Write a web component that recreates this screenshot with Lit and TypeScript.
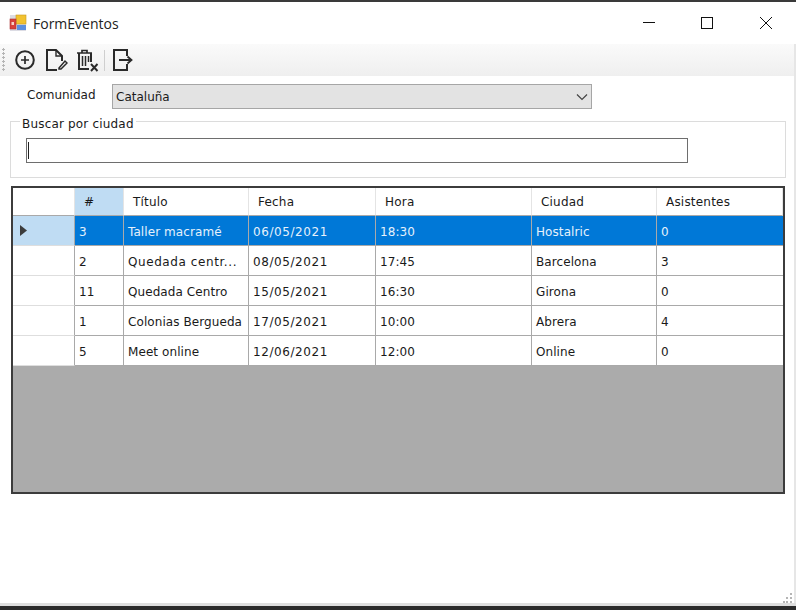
import { LitElement, html, css, svg } from "lit";
import { customElement } from "lit/decorators.js";

const COLS = ["#", "Título", "Fecha", "Hora", "Ciudad", "Asistentes"];
const ROWS = [
  ["3", "Taller macramé", "06/05/2021", "18:30", "Hostalric", "0"],
  ["2", "Quedada centr...", "08/05/2021", "17:45", "Barcelona", "3"],
  ["11", "Quedada Centro", "15/05/2021", "16:30", "Girona", "0"],
  ["1", "Colonias Bergueda", "17/05/2021", "10:00", "Abrera", "4"],
  ["5", "Meet online", "12/06/2021", "12:00", "Online", "0"],
];

const isWide = (t: string) => t.endsWith("...") || /^\d+\/\d+\/\d+$/.test(t);

@customElement("app-root")
export class AppRoot extends LitElement {
  static styles = css`
    :host { display: block; width: 796px; height: 610px; background: #fff; font-family: "DejaVu Sans", sans-serif; font-size: 12px; color: #1a1a1a; overflow: hidden; }
    .win { height: 610px; display: flex; flex-direction: column; box-sizing: border-box; border-top: 2px solid #3a3a3a; position: relative; }
    .title { height: 42px; flex: none; display: flex; align-items: center; padding-left: 9px; gap: 6px; font-family: "Open Sans", sans-serif; font-size: 14px; color: #222; box-sizing: border-box; }
    .ctl { margin-left: auto; display: flex; align-items: center; }
    .ctl svg { display: block; width: 158px; height: 16px; }
    .toolbar { height: 32px; flex: none; margin-right: 2px; background: linear-gradient(#fafafa, #efefef); display: flex; align-items: center; padding-left: 2px; }
    .grip { width: 3px; height: 24px; margin-right: 7.5px; background-image: radial-gradient(circle at 1.5px 1.5px, #b4b4b4 1.2px, transparent 1.4px); background-size: 3px 4px; }
    .toolbar svg { display: block; flex: none; }
    .gap { width: 7px; flex: none; }
    .tb-sep { width: 1px; height: 21px; background: #cfcfcf; margin: 0 5px; flex: none; }
    .body { flex: 1; display: flex; flex-direction: column; padding: 8px 10px 0 10px; min-height: 0; }
    .com { display: flex; align-items: center; height: 25px; }
    .com label { width: 102px; padding-left: 17px; box-sizing: border-box; padding-bottom: 4px; }
    .combo { width: 480px; height: 25px; box-sizing: border-box; background: #e3e3e3; border: 1px solid #a6a6a6; display: flex; align-items: center; justify-content: space-between; padding: 0 3px 0 3px; }
    .combo svg { display: block; }
    fieldset { margin: 2px 0 0 0; padding: 0; width: 776px; height: 67px; box-sizing: border-box; border: 1px solid #dcdcdc; min-inline-size: 0; }
    legend { margin-left: 9px; padding: 6px 2px 0; line-height: 14px; font-size: 12px; letter-spacing: 0.18px; }
    .input { margin: 7px 0 0 15px; width: 662px; height: 25px; box-sizing: border-box; border: 1px solid #6e6e6e; background: #fff; display: flex; align-items: center; padding-left: 1px; }
    .caret { width: 1px; height: 17px; background: #222; }
    .grid { margin: 8px 0 0 1px; width: 774px; height: 308px; box-sizing: border-box; border: 2px solid #3c3c3c; background: #ababab; display: flex; flex-direction: column; flex: none; }
    .row { display: grid; grid-template-columns: 62px 49px 125px 127px 156px 125px 126px; height: 30px; flex: none; }
    .row.head { height: 28px; }
    .cell { box-sizing: border-box; background: #fff; border-right: 1px solid #a9a9a9; border-bottom: 1px solid #a9a9a9; padding: 2px 0 0 4px; display: flex; align-items: center; white-space: nowrap; overflow: hidden; letter-spacing: 0.08px; }
    .cell.wide { letter-spacing: 0.58px; }
    .cell:last-child { border-right: none; }
    .head .cell { border-right: 1px solid #e4e4e4; border-bottom: 1px solid #a9a9a9; padding: 0 0 0 9px; letter-spacing: 0.2px; }
    .head .cell.num { background: #bfdcf3; }
    .rowhead { border-right-color: #a9a9a9; border-bottom-color: #dedede; padding: 0 0 0 7px; }
    .sel .cell { background: #0078d7; color: #e6f1fb; }
    .sel .rowhead { background: #bfdcf3; }
    .grip-br { position: absolute; right: 3px; bottom: 7px; display: block; }
    .bottom { position: absolute; left: 0; right: 0; bottom: 0; height: 7px; box-sizing: border-box; background: #2b2b2b; border-top: 3px solid #dedede; }
    .side { position: absolute; right: 0; top: 42px; bottom: 7px; width: 2px; background: #e6e6e6; }
  `;

  private appIcon() {
    return html`<svg width="18" height="18" viewBox="0 0 18 18">
      <rect x="1" y="1" width="16" height="16" fill="#dcdce4"/>
      <rect x="7" y="1" width="10" height="9" fill="#f2c230" stroke="#c59a20" stroke-width=".6"/>
      <rect x="1" y="5" width="6" height="10" fill="#d8413c" stroke="#a33" stroke-width=".6"/>
      <rect x="2.5" y="8" width="2.5" height="3" fill="#f4d0c8"/>
      <rect x="8" y="11" width="9" height="5" fill="#5b8fe0"/>
    </svg>`;
  }

  private winCtl() {
    return html`<svg viewBox="0 0 158 16">
      <path d="M5 7.5H17" stroke="#111" stroke-width="1" fill="none"/>
      <rect x="63.5" y="2.5" width="11" height="11" stroke="#111" stroke-width="1" fill="none"/>
      <path d="M122 2L134 14M134 2L122 14" stroke="#111" stroke-width="1" fill="none"/>
    </svg>`;
  }

  private chevron() {
    return html`<svg width="12" height="8" viewBox="0 0 12 8"><path d="M1 1.5L6 6.5L11 1.5" stroke="#444" stroke-width="1.2" fill="none"/></svg>`;
  }

  private tool(body: unknown) {
    return html`<svg width="24" height="24" viewBox="0 0 24 24" fill="none" stroke="#2a2a2a" stroke-width="2">${body}</svg>`;
  }

  render() {
    return html`<div class="win">
      <div class="title">
        ${this.appIcon()}
        <span>FormEventos</span>
        <div class="ctl">${this.winCtl()}</div>
      </div>
      <div class="toolbar">
        <div class="grip"></div>
        ${this.tool(svg`<circle cx="12" cy="12" r="8.8"/><path d="M12 8v8M8 12h8" stroke-width="1.7"/>`)}
        <span class="gap"></span>
        ${this.tool(svg`<path d="M18 13V8l-6-6H3v20h10"/><path d="M12 2v6h6" stroke-width="1.4"/><path d="M15 20l6-7 2 2-6 6h-2z" stroke-width="1.5"/>`)}
        <span class="gap"></span>
        ${this.tool(svg`<path d="M2 5h15M7 5V2.5h5V5" stroke-width="1.7"/><path d="M4 5v16h10M16 5v9" stroke-width="2"/><path d="M7.5 8v10M10.5 8v10M13.5 8v6" stroke-width="1.5"/><path d="M16 16l6.5 7M22.5 16L16 23" stroke-width="1.9"/>`)}
        <div class="tb-sep"></div>
        ${this.tool(svg`<path d="M17 8V2H4v20h13v-6"/><path d="M9 12h12M17.5 8.5l4 3.5-4 3.5" stroke-width="1.8"/>`)}
      </div>
      <div class="body">
        <div class="com">
          <label>Comunidad</label>
          <div class="combo"><span>Cataluña</span>${this.chevron()}</div>
        </div>
        <fieldset>
          <legend>Buscar por ciudad</legend>
          <div class="input"><div class="caret"></div></div>
        </fieldset>
        <div class="grid">
          <div class="row head">
            <div class="cell"></div>
            ${COLS.map((c, i) => html`<div class="cell ${i === 0 ? "num" : ""}">${c}</div>`)}
          </div>
          ${ROWS.map((r, i) => html`<div class="row ${i === 0 ? "sel" : ""}">
            <div class="cell rowhead">${i === 0 ? html`<svg width="7" height="11" viewBox="0 0 7 11"><path d="M0 0L7 5.5L0 11z" fill="#3c3c3c"/></svg>` : ""}</div>
            ${r.map((c) => html`<div class="cell ${isWide(c) ? "wide" : ""}">${c}</div>`)}
          </div>`)}
        </div>
      </div>
      <svg class="grip-br" width="10" height="10" viewBox="0 0 10 10" fill="#b5b5b5">
        <rect x="7" y="0" width="2" height="2"/><rect x="7" y="4" width="2" height="2"/><rect x="3" y="4" width="2" height="2"/>
        <rect x="7" y="8" width="2" height="2"/><rect x="3" y="8" width="2" height="2"/><rect x="0" y="8" width="2" height="2"/>
      </svg>
      <div class="side"></div>
      <div class="bottom"></div>
    </div>`;
  }
}
